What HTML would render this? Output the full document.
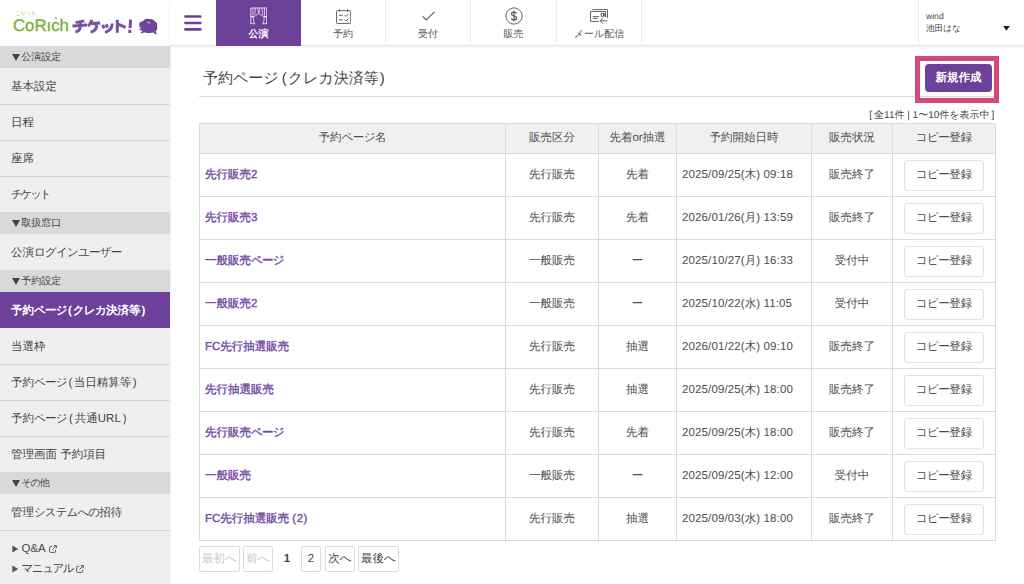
<!DOCTYPE html>
<html lang="ja">
<head>
<meta charset="utf-8">
<title>予約ページ(クレカ決済等)</title>
<style>
*{box-sizing:border-box;margin:0;padding:0}
html,body{width:1024px;height:584px;overflow:hidden;background:#fff}
body{font-family:"Liberation Sans",sans-serif;color:#444;font-size:12px;position:relative;text-rendering:geometricPrecision}
a{text-decoration:none;color:inherit}
/* sidebar */
#side{position:absolute;left:0;top:0;width:170px;height:584px;background:#efefef;box-shadow:1px 0 0 #f4f4f4}
#logo{position:absolute;left:0;top:0;width:170px;height:46px;background:#fff}
.sh{position:absolute;left:0;width:170px;height:22px;background:#d9d9d9;color:#444;font-size:10px;line-height:24px;padding-left:21.3px;overflow:hidden}
.sh:before{content:"";position:absolute;left:12px;top:8px;border-left:4.3px solid transparent;border-right:4.3px solid transparent;border-top:7.6px solid #444}
.si{position:absolute;left:0;width:170px;height:36px;color:#444;font-size:11.5px;line-height:38px;padding-left:11px;white-space:nowrap;overflow:hidden}
.si.bt{border-top:1px solid #d4d4d4;line-height:36px}
.si.act{background:#6b4199;color:#fff;font-weight:bold}
.k{letter-spacing:-0.7px}
.k2{letter-spacing:-0.45px}
.p{margin:0 1px}
.sl{position:absolute;left:11px;font-size:11px;color:#444;white-space:nowrap}
/* top nav */
#nav{position:absolute;left:170px;top:0;width:854px;height:46px;background:#fff;border-bottom:1px solid #e3e7eb;box-shadow:0 1px 3px rgba(0,0,0,0.07)}
.tab{position:absolute;top:0;width:85px;height:46px;border-right:1px solid #e8ebef;text-align:center;color:#555;font-size:10px}
.tab span{position:absolute;left:0;right:0;top:27.9px;line-height:14px}
.tab svg{position:absolute;left:50%;top:6px}
.tab.act{background:#6b4199;color:#fff;border-right:none;font-weight:bold}
#user{position:absolute;left:918px;top:0;width:106px;height:45px;border-left:1px solid #e8ebef;font-size:9px;color:#444}
/* main */
#title{position:absolute;left:203px;top:68px;font-size:15px;line-height:22px;color:#444;white-space:nowrap}
#hr{position:absolute;left:199px;top:96px;width:797px;height:1px;background:#dcdcdc}
#hl{position:absolute;left:915px;top:56px;width:84px;height:46.5px;border:5px solid #d24a7d}
#newbtn{position:absolute;left:925px;top:64px;width:67px;height:28px;border-radius:4px;background:#6b4199;color:#fff;font-size:11.5px;font-weight:bold;text-align:center;line-height:28px}
#count{position:absolute;right:29.7px;top:108.5px;font-size:10px;line-height:14px;color:#444;white-space:nowrap}
table{position:absolute;left:199px;top:123px;width:796px;border-collapse:collapse;table-layout:fixed;font-size:11.5px}
th,td{border:1px solid #dbdbdb;text-align:center;vertical-align:middle;color:#4d4d4d;font-weight:normal;white-space:nowrap}
th{height:30px;background:#f0f0f0}
td{height:43px;padding-top:1px}
td:last-child{padding-top:0}
td.n{text-align:left;padding-left:5px;color:#7349a3;font-weight:normal;-webkit-text-stroke:0.35px #7349a3}
td.d{text-align:left;padding-left:5px;letter-spacing:0.12px}
.cb{display:inline-block;width:80px;height:31px;border:1px solid #e0e3e8;border-radius:3px;line-height:29px;vertical-align:middle;color:#484d55;background:#fff}
.pg{position:absolute;top:546px;height:26px;border:1px solid #dcdcdc;border-radius:2px;font-size:11.5px;line-height:24px;text-align:center;color:#444;background:#fff}
.pg.dis{color:#c8c8c8}
</style>
</head>
<body>
<div id="side">
  <div id="logo">
    <div style="position:absolute;left:15px;top:11px;font-size:5.5px;line-height:7px;color:#9cc56a;letter-spacing:-0.3px;white-space:nowrap">こりっち</div>
    <div style="position:absolute;left:13px;top:15px;font-size:16.8px;line-height:22px;color:#7bb23c;white-space:nowrap;-webkit-text-stroke:0.4px #7bb23c">CoR&#305;ch</div>
    <div style="position:absolute;left:55.3px;top:16.5px;width:2px;height:2px;border-radius:50%;background:#7bb23c"></div>
    <svg style="position:absolute;left:68px;top:14px" width="96" height="24" viewBox="68 14 96 24"><g fill="none" stroke="#7a50a6" stroke-width="3" stroke-linecap="butt" stroke-linejoin="round">
<path d="M84.4 20.9L75.6 22.6M72.4 25.9L87 25.1M80.2 22.2V27.2C80.2 29.8 78.4 31.2 75.4 32"/>
<path d="M91.8 19.8C91.2 22.2 90 24.4 88 26M90.6 23.4L100.2 22.9M96.4 23.4V26.8C96.4 29.6 94.4 31.2 90.6 32.1"/>
<path d="M102.6 24.9L104.2 28.4M106.2 24.2L107.6 27.6M112.2 23.6C112.2 28.4 110 31 105 32.4"/>
<path d="M117.3 19.7V32.8M118 24.2L125.6 27.4"/>
<path d="M130.6 19.7L130 28.2M129.8 29.8V33"/></g>
<path fill="#6f459c" d="M139.2 24C139.6 21.8 141.6 21 143 21.4C144 19.2 147 18.2 149.2 19.2C151.2 18.4 153.8 19.4 154.6 21.2C156.8 21.8 157.8 24 157 26.2C157.8 28 157.2 30.4 155.6 31.2L156.8 33.6L155.4 34.4L153.8 32.6C151.4 33.4 147 33.2 144.6 32.2L141.6 33.4L140.6 32.4L142.6 31L139.4 29.8L139.6 28.6L141.8 28.4C139.8 27.8 138.8 25.8 139.2 24Z"/>
<path fill="none" stroke="#cdb9e2" stroke-width="0.8" d="M147 23C147.2 21.4 149.6 21.2 149.8 22.8C149.9 23.8 148.6 24.1 148.3 23.3"/></svg>
  </div>
  <div class="sh" style="top:46px">公演設定</div>
  <div class="si" style="top:68px">基本設定</div>
  <div class="si bt" style="top:104px">日程</div>
  <div class="si bt" style="top:140px">座席</div>
  <div class="si bt" style="top:176px"><span style="letter-spacing:-2.2px">チケット</span></div>
  <div class="sh" style="top:212px">取扱窓口</div>
  <div class="si" style="top:234px">公演<span style="letter-spacing:-0.75px">ログインユーザー</span></div>
  <div class="sh" style="top:270px">予約設定</div>
  <div class="si act" style="top:292px">予約<span class="k">ページ</span><span class="p">(</span><span class="k">クレカ</span>決済等<span class="p">)</span></div>
  <div class="si" style="top:328px">当選枠</div>
  <div class="si bt" style="top:364px">予約<span class="k">ページ</span><span class="p" style="margin:0 1.5px">(</span>当日精算等<span class="p" style="margin:0 1.5px">)</span></div>
  <div class="si bt" style="top:400px">予約<span class="k">ページ</span><span class="p" style="margin:0 2px">(</span>共通URL<span class="p" style="margin:0 2px">)</span></div>
  <div class="si bt" style="top:436px">管理画面 予約項目</div>
  <div class="sh" style="top:472px"><span style="letter-spacing:-1px">その他</span></div>
  <div class="si" style="top:494px">管理<span style="letter-spacing:-0.9px">システムへの</span>招待</div>
  <div style="position:absolute;left:0;top:530px;width:170px;height:1px;background:#d4d4d4"></div>
  <svg style="position:absolute;left:11.5px;top:544.5px" width="7" height="8" viewBox="0 0 7 8"><path fill="#555" d="M0.3 0.4L6.3 4L0.3 7.6Z"/></svg><div class="sl" style="left:21.5px;top:541.5px;font-size:11.5px;line-height:14px">Q&amp;A</div><svg style="position:absolute;left:49px;top:545px" width="8" height="8" viewBox="0 0 8 8" fill="none" stroke="#555" stroke-width="1"><path d="M3.2 1.4H1.6Q0.6 1.4 0.6 2.4V6.4Q0.6 7.4 1.6 7.4H5.6Q6.6 7.4 6.6 6.4V4.8"/><path d="M3.4 4.6L7.2 0.8M4.8 0.6H7.4V3.2"/></svg><svg style="position:absolute;left:11.5px;top:564.5px" width="7" height="8" viewBox="0 0 7 8"><path fill="#555" d="M0.3 0.4L6.3 4L0.3 7.6Z"/></svg><div class="sl" style="left:21.5px;top:561.5px;font-size:11.5px;line-height:14px;letter-spacing:-1.45px">マニュアル</div><svg style="position:absolute;left:76px;top:565px" width="8" height="8" viewBox="0 0 8 8" fill="none" stroke="#555" stroke-width="1"><path d="M3.2 1.4H1.6Q0.6 1.4 0.6 2.4V6.4Q0.6 7.4 1.6 7.4H5.6Q6.6 7.4 6.6 6.4V4.8"/><path d="M3.4 4.6L7.2 0.8M4.8 0.6H7.4V3.2"/></svg>
</div>
<div id="nav">
  <svg style="position:absolute;left:14px;top:14px" width="18" height="18" viewBox="0 0 18 18"><g stroke="#6b4199" stroke-width="2.6" stroke-linecap="round"><path d="M1.4 2.5H16.4M1.4 9H16.4M1.4 15.4H16.4"/></g></svg>
  <div class="tab act" style="left:46px">
    <svg style="margin-left:-9px;top:7.2px" width="17.5" height="17.4" viewBox="0 0 18 18" fill="none" stroke="#fff" stroke-opacity="0.88" stroke-width="0.9"><path d="M0.8 17.4V1H17.2V17.4M0.4 17.3H4.9M17.6 17.3H13.1"/><path stroke-opacity="0.8" d="M3 1V9M5.6 1L4.8 8.2M15 1V9M12.4 1L13.2 8.2M7.6 1L9 6L10.4 1"/><path d="M9 6C7.6 8.4 4.6 10 1.2 10.3M9 6C10.4 8.4 13.4 10 16.8 10.3"/><path stroke-opacity="0.85" d="M3.5 10.2C3.2 13 3.8 15.6 4.9 17.3M14.5 10.2C14.8 13 14.2 15.6 13.1 17.3"/><path stroke-width="1.4" d="M0.8 10H3.4M17.2 10H14.6"/></svg>
    <span>公演</span></div>
  <div class="tab" style="left:131px">
    <svg style="margin-left:-7.2px;top:8.6px" width="15.2" height="15.2" viewBox="0 0 16 16" fill="none" stroke="#5c5c5c" stroke-width="1"><rect x="0.5" y="1.8" width="15" height="13.4" rx="0.8"/><path d="M3.8 0.2V3M12.2 0.2V3"/><path d="M3 6.6H7.2M3 11.4H7.2"/><path d="M9 6.2L10.6 7.8L13.2 5.2M9 11L10.6 12.6L13.2 10"/></svg>
    <span>予約</span></div>
  <div class="tab" style="left:216px">
    <svg style="margin-left:-6.5px;top:10.6px" width="13.6" height="10" viewBox="0 0 15 11" fill="none" stroke="#5c5c5c" stroke-width="1.15"><path d="M0.8 5.8L4.6 9.8L13.8 1"/></svg>
    <span>受付</span></div>
  <div class="tab" style="left:301px;width:86px">
    <svg style="margin-left:-8.6px;top:7px" width="18" height="18" viewBox="0 0 19 19" fill="none" stroke="#5c5c5c" stroke-width="1"><circle cx="9.5" cy="9.5" r="8.6"/><path stroke-width="1.3" d="M12.2 7.1C11.8 5.8 10.7 5.3 9.5 5.3C7.9 5.3 6.8 6.2 6.8 7.4C6.8 10 12.3 8.8 12.3 11.6C12.3 12.9 11.1 13.7 9.5 13.7C8.1 13.7 7 13.1 6.7 11.9M9.5 3.8V15.2"/></svg>
    <span>販売</span></div>
  <div class="tab" style="left:387px">
    <svg style="margin-left:-9px;top:9px" width="19" height="16.2" viewBox="0 0 20 17" fill="none" stroke="#5c5c5c" stroke-width="1"><path d="M2.4 0.6H18.4V9.6"/><path d="M9.4 13H0.6V2.6H16.4V8.6"/><path d="M3 8H9.6M3 9.9H8"/><rect x="11.8" y="4.6" width="2.4" height="3"/><path d="M15.4 4.4V7.8"/><path d="M18.4 12.4H10.6M13.6 9.4L10.6 12.4L13.6 15.4"/></svg>
    <span>メール配信</span></div>
</div>
<div id="user">
  <div style="position:absolute;left:7px;top:10.5px;font-size:8.6px;line-height:11px">wind</div>
  <div style="position:absolute;left:7px;top:21.9px;font-size:8.6px;line-height:12px;white-space:nowrap">池田はな</div>
  <svg style="position:absolute;left:83.6px;top:26.4px" width="7" height="4.8" viewBox="0 0 7 5"><path fill="#222" d="M0 0H7L3.5 5Z"/></svg>
</div>
<div id="title">予約ページ<span style="margin:0 1px 0 3px">(</span>クレカ決済等<span style="margin-left:1px">)</span></div>
<div id="hr"></div>
<div id="hl"></div>
<div id="newbtn">新規作成</div>
<div id="count">[<span style="margin-left:2px">全</span>11件 | 1〜10件を表示<span style="margin-right:2px">中</span>]</div>
<table>
<colgroup><col style="width:306px"><col style="width:93px"><col style="width:78px"><col style="width:135px"><col style="width:81px"><col style="width:103px"></colgroup>
<tr><th>予約<span class="k2">ページ</span>名</th><th>販売区分</th><th>先着or抽選</th><th>予約開始日時</th><th>販売状況</th><th><span class="k2">コピー</span>登録</th></tr>
<tr><td class="n">先行販売2</td><td>先行販売</td><td>先着</td><td class="d">2025/09/25(木) 09:18</td><td>販売終了</td><td><span class="cb"><span class="k2">コピー</span>登録</span></td></tr>
<tr><td class="n">先行販売3</td><td>先行販売</td><td>先着</td><td class="d">2026/01/26(月) 13:59</td><td>販売終了</td><td><span class="cb"><span class="k2">コピー</span>登録</span></td></tr>
<tr><td class="n">一般販売<span class="k">ページ</span></td><td>一般販売</td><td>ー</td><td class="d">2025/10/27(月) 16:33</td><td>受付中</td><td><span class="cb"><span class="k2">コピー</span>登録</span></td></tr>
<tr><td class="n">一般販売2</td><td>一般販売</td><td>ー</td><td class="d">2025/10/22(水) 11:05</td><td>受付中</td><td><span class="cb"><span class="k2">コピー</span>登録</span></td></tr>
<tr><td class="n">FC先行抽選販売</td><td>先行販売</td><td>抽選</td><td class="d">2026/01/22(木) 09:10</td><td>販売終了</td><td><span class="cb"><span class="k2">コピー</span>登録</span></td></tr>
<tr><td class="n">先行抽選販売</td><td>先行販売</td><td>抽選</td><td class="d">2025/09/25(木) 18:00</td><td>販売終了</td><td><span class="cb"><span class="k2">コピー</span>登録</span></td></tr>
<tr><td class="n">先行販売<span class="k">ページ</span></td><td>先行販売</td><td>先着</td><td class="d">2025/09/25(木) 18:00</td><td>販売終了</td><td><span class="cb"><span class="k2">コピー</span>登録</span></td></tr>
<tr><td class="n">一般販売</td><td>一般販売</td><td>ー</td><td class="d">2025/09/25(木) 12:00</td><td>受付中</td><td><span class="cb"><span class="k2">コピー</span>登録</span></td></tr>
<tr><td class="n">FC先行抽選販売<span style="margin:0 0.5px 0 3px">(</span>2<span style="margin-left:0.5px">)</span></td><td>先行販売</td><td>抽選</td><td class="d">2025/09/03(水) 18:00</td><td>販売終了</td><td><span class="cb"><span class="k2">コピー</span>登録</span></td></tr>
</table>
<div class="pg dis" style="left:199px;width:41px">最初へ</div>
<div class="pg dis" style="left:243px;width:30px">前へ</div>
<div class="pg" style="left:277px;width:20px;border-color:transparent;font-weight:bold">1</div>
<div class="pg" style="left:301px;width:20px">2</div>
<div class="pg" style="left:325px;width:30px">次へ</div>
<div class="pg" style="left:358px;width:41px">最後へ</div>
</body>
</html>
